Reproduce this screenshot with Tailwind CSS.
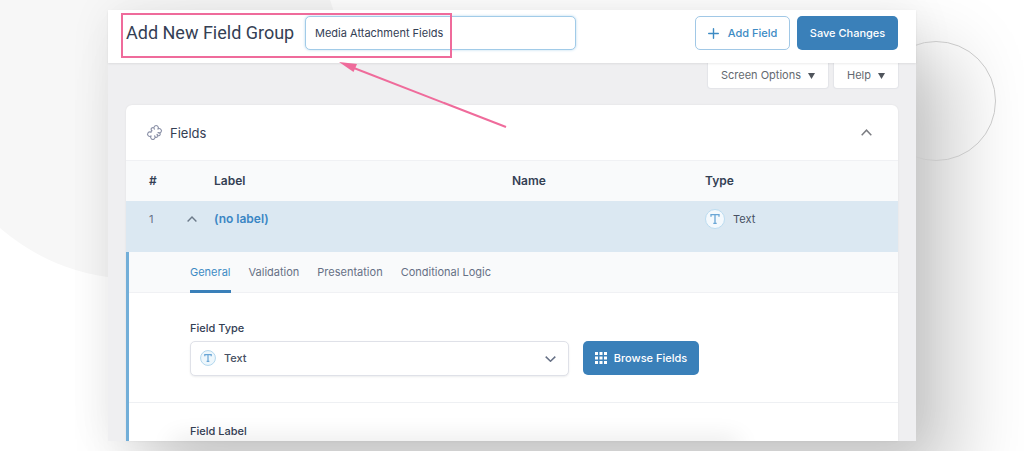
<!DOCTYPE html>
<html lang="en">
<head>
<meta charset="utf-8">
<meta name="viewport" content="width=device-width, initial-scale=1">
<title>Add New Field Group</title>
<script src="https://cdn.jsdelivr.net/npm/@tailwindcss/browser@4"></script>
</head>
<body class="relative flex min-h-screen flex-col overflow-hidden bg-white px-[108px] py-[10px] font-['Inter',sans-serif] text-[#344054]">
  <!-- Backdrop shapes -->
  <div class="absolute -top-[135px] -left-[71px] size-[414px] rounded-full bg-[#f7f7f7]"></div>

  <main class="relative flex flex-1 flex-col bg-[#efeff1] shadow-[0_0_40px_rgba(0,0,0,0.07),40px_44px_70px_rgba(0,0,0,0.20)]">
    <header class="relative z-10 flex items-center bg-white px-[18px] pt-[6px] pb-[13px] shadow-[0_1px_2px_rgba(0,0,0,0.08)]">
      <h1 class="w-[165px] font-['Roboto',sans-serif] text-[18px] leading-6 whitespace-nowrap"><label for="title">Add New Field Group</label></h1>
      <input id="title" type="text" value="Media Attachment Fields" class="ml-[14px] h-[34px] w-[271px] rounded-[5px] border border-[#a1cbe8] bg-white px-[9px] text-[11px] text-[#344054] shadow-[0_0_3px_#b9d9ef] outline-none">
      <div class="ml-auto flex gap-[7px]">
        <button type="button" class="flex h-[34px] w-[95px] items-center justify-center gap-[9px] rounded-[5px] border border-[#a1c8e6] bg-white text-[11px] font-medium whitespace-nowrap text-[#3d8bc4]">
          <svg class="size-[11px]" viewBox="0 0 11 11" fill="none" stroke="currentColor" stroke-width="1.400" stroke-linecap="round" aria-hidden="true"><path d="M5.500.7v9.600M.7 5.500h9.600"/></svg>Add Field</button>
        <button type="button" class="h-[34px] w-[101px] rounded-[5px] bg-[#3a80b9] text-[11px] font-medium whitespace-nowrap text-white">Save Changes</button>
      </div>
    </header>

    <div class="flex justify-end gap-[6px] px-[18px]">
      <button type="button" class="flex h-[25px] w-[120px] items-center justify-center gap-[7px] rounded-b-[3px] bg-white text-[11px] text-[#646970] shadow-[0_0_1px_1px_#e3e4e8]">Screen Options
        <svg class="h-[6px] w-[7px]" viewBox="0 0 7 6" fill="#50555c" aria-hidden="true"><path d="M0 0h7L3.500 6z"/></svg></button>
      <button type="button" class="flex h-[25px] w-[64px] items-center justify-center gap-[7px] rounded-b-[3px] bg-white text-[11px] text-[#646970] shadow-[0_0_1px_1px_#e3e4e8]">Help
        <svg class="h-[6px] w-[7px]" viewBox="0 0 7 6" fill="#50555c" aria-hidden="true"><path d="M0 0h7L3.500 6z"/></svg></button>
    </div>

    <section class="mx-[18px] mt-[17px] flex flex-1 flex-col rounded-t-[6px] bg-white shadow-[0_0_2px_rgba(0,0,0,0.08)]">
      <div class="flex h-[55px] items-center pr-[26px] pl-[20px]">
        <svg class="size-[17px]" viewBox="0 0 24 24" fill="none" stroke="#8c92a8" stroke-width="1.600" stroke-linejoin="round" aria-hidden="true"><path d="M8.500 9.500A2.300 2.300 0 1 1 11.800 7.200A3.100 3.100 0 1 1 16.800 7.200A3.100 3.100 0 1 1 17 12.200A2.300 2.300 0 1 1 15.500 14.500A2.300 2.300 0 1 1 12.200 16.800A3.100 3.100 0 1 1 7.200 16.800A3.100 3.100 0 1 1 7 11.800A2.300 2.300 0 0 1 8.500 9.500z"/></svg>
        <h2 class="ml-[7px] text-[13px] leading-5">Fields</h2>
        <button type="button" aria-label="Collapse fields" class="ml-auto"><svg class="h-[7px] w-[11px]" viewBox="0 0 11 7" fill="none" stroke="#7b7d82" stroke-width="1.500" aria-hidden="true"><path d="M.7 6.200 5.500 1.200l4.800 5"/></svg></button>
      </div>

      <table class="w-full table-fixed border-collapse text-left">
        <colgroup><col class="w-[61px]"><col class="w-[27px]"><col><col class="w-[25%]"><col class="w-[25%]"></colgroup>
        <thead>
          <tr class="h-[41px] bg-[#f9fafb] text-[12px] shadow-[inset_0_1px_#f0f1f4]">
            <th scope="col" class="pl-[23px] font-semibold" colspan="2">#</th>
            <th scope="col" class="font-semibold">Label</th>
            <th scope="col" class="font-semibold">Name</th>
            <th scope="col" class="font-semibold">Type</th>
          </tr>
        </thead>
        <tbody>
          <tr class="h-[51px] bg-[#dbe8f2] align-top">
            <td class="pt-[10px] pl-[23px] text-[11px] leading-4 text-[#667085]">1</td>
            <td class="pt-[10px]"><button type="button" aria-label="Close field" class="flex h-4 items-center"><svg class="h-[6px] w-[10px]" viewBox="0 0 10 6" fill="none" stroke="#6c7a8a" stroke-width="1.400" aria-hidden="true"><path d="M.6 5.400 5 1l4.400 4.400"/></svg></button></td>
            <td class="pt-[10px] text-[12px] leading-4 font-semibold"><a href="#settings" class="text-[#3a86c4]">(no label)</a></td>
            <td></td>
            <td class="pt-[8px]">
              <span class="flex h-5 items-center gap-[8px] text-[11px] text-[#475063]">
                <svg class="size-[20px]" viewBox="0 0 20 20" aria-hidden="true"><circle cx="10" cy="10" r="9.500" fill="#f4f9fd" stroke="#bcdcf0"/><path d="M6 7.800V5.700h8v2.100M10 5.700v8.600M8.300 14.300h3.400" fill="none" stroke="#6aa6d6" stroke-width="1.300"/></svg>Text</span>
            </td>
          </tr>
        </tbody>
      </table>

      <div id="settings" class="flex-1 border-l-[3px] border-[#72aed8]">
        <nav class="flex h-[41px] gap-[18px] border-b border-[#f0f1f4] bg-[#f9fafb] pl-[61px] text-[11px] text-[#667085]">
          <a href="#general" aria-current="page" class="-mb-px flex items-center border-b-[3px] border-[#3a80b9] pt-[2px] text-[#3d8bc4]">General</a>
          <a href="#validation" class="flex items-center">Validation</a>
          <a href="#presentation" class="flex items-center">Presentation</a>
          <a href="#conditional" class="flex items-center">Conditional Logic</a>
        </nav>
        <div class="border-b border-[#eef0f3] pt-[27px] pb-[26px] pl-[61px]">
          <label for="type" class="block text-[11px] leading-4 font-medium">Field Type</label>
          <div class="mt-[5px] flex gap-[14px]">
            <div class="relative w-[379px]">
              <select id="type" class="h-[35px] w-full appearance-none rounded-[5px] border border-[#dfe1e8] bg-white pr-[32px] pl-[33px] text-[11px] font-medium text-[#475063] shadow-[0_1px_2px_rgba(16,24,40,0.08)]"><option>Text</option></select>
              <svg class="pointer-events-none absolute top-[9px] left-[10px] size-[16px]" viewBox="0 0 20 20" aria-hidden="true"><circle cx="10" cy="10" r="9.300" fill="#eef7fc" stroke="#b0d5ec" stroke-width="1.200"/><path d="M6 7.800V5.700h8v2.100M10 5.700v8.600M8.300 14.300h3.400" fill="none" stroke="#6aa6d6" stroke-width="1.500"/></svg>
              <svg class="pointer-events-none absolute top-[15px] right-[13px] h-[6px] w-[11px]" viewBox="0 0 11 6" fill="none" stroke="#667085" stroke-width="1.500" aria-hidden="true"><path d="M.7.600 5.500 5.200 10.300.600"/></svg>
            </div>
            <button type="button" class="flex h-[34px] w-[116px] items-center justify-center gap-[7px] rounded-[5px] bg-[#3a80b9] text-[11px] font-medium whitespace-nowrap text-white">
              <svg class="size-[12px]" viewBox="0 0 12 12" fill="currentColor" aria-hidden="true"><path d="M0 0h3v3H0zM4.500 0h3v3h-3zM9 0h3v3H9zM0 4.500h3v3H0zM4.500 4.500h3v3h-3zM9 4.500h3v3H9zM0 9h3v3H0zM4.500 9h3v3h-3zM9 9h3v3H9z"/></svg>Browse Fields</button>
          </div>
        </div>
        <div class="pt-[20px] pl-[61px]">
          <h3 class="text-[11px] leading-4 font-medium">Field Label</h3>
        </div>
      </div>
    </section>

    <!-- Soft shade along the lower edge -->
    <div class="pointer-events-none absolute inset-x-0 bottom-0 h-[24px] overflow-hidden"><div class="absolute top-[24px] left-[8%] h-[10px] w-[70%] shadow-[0_0_24px_rgba(0,0,0,0.16)]"></div></div>
  </main>

  <!-- Outlined circle, visible beside the panel -->
  <div class="pointer-events-none absolute top-[41px] right-[28px] h-[120px] w-[80px] overflow-hidden"><div class="absolute top-0 right-0 size-[120px] rounded-full border border-[#c9c9c9]"></div></div>

  <!-- Annotation -->
  <svg class="pointer-events-none absolute top-0 left-0 z-20 h-[140px] w-[520px]" viewBox="0 0 520 140" fill="none" stroke="#ef6b9b" stroke-width="2" aria-hidden="true"><path d="M122 14h329v43H122z"/><path d="M350 66.500 506 127"/><path d="m339 62 18 2-3.500 8z" fill="#ef6b9b" stroke="none"/></svg>
</body>
</html>
